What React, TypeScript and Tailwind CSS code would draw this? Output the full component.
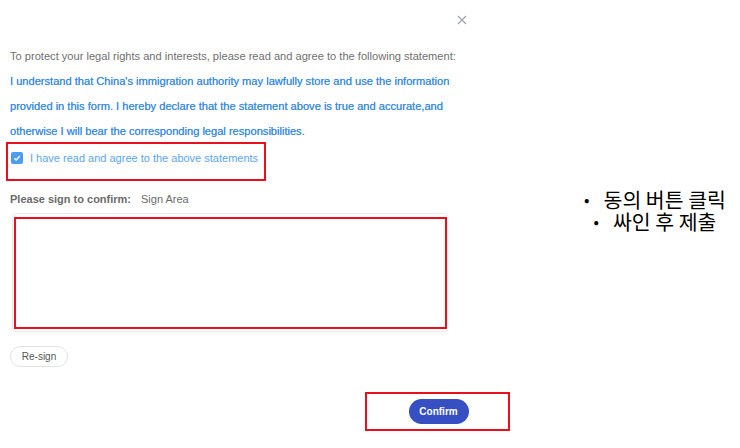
import React from 'react';

const App: React.FC = () => {
  return (
    <div className="w-[740px] h-[448px] bg-white flex overflow-hidden font-['Liberation_Sans',Arial,sans-serif]">
      <div className="w-[520px] shrink-0">
        <div className="h-[44px] flex justify-end pr-[53px] pt-[15px]">
          <svg width="10" height="10" viewBox="0 0 10 10" className="text-gray-400">
            <path d="M1 1L9 9M9 1L1 9" stroke="currentColor" strokeWidth="1.1" />
          </svg>
        </div>
        <div className="pl-[10px] text-[11.1px] leading-[25px] whitespace-nowrap">
          <p className="text-[#707070]">To protect your legal rights and interests, please read and agree to the following statement:</p>
          <p className="text-[#3f8fe3] [text-shadow:0_0_0.4px_#3f8fe3]">
            I understand that China's immigration authority may lawfully store and use the information
            <br />
            provided in this form. I hereby declare that the statement above is true and accurate,and
            <br />
            otherwise I will bear the corresponding legal responsibilities.
          </p>
        </div>
        <div className="ml-[6px] -mt-[2px] w-[260px] h-[39px] border-2 border-[#e8101a] flex items-center pb-[8px] pl-[3px] gap-[7px]">
          <span className="w-[12px] h-[12px] rounded-[2px] bg-[#4c9cf0] flex items-center justify-center">
            <svg width="8" height="8" viewBox="0 0 8 8">
              <path d="M1.2 4.2L3.2 6L6.8 2" stroke="white" strokeWidth="1.3" fill="none" />
            </svg>
          </span>
          <span className="text-[11px] text-[#5aa6f2] leading-[16px] whitespace-nowrap">I have read and agree to the above statements</span>
        </div>
        <div className="pl-[10px] mt-[10px] text-[11px] leading-[16px] flex gap-[10px]">
          <span className="font-bold text-[#6b6b6b]">Please sign to confirm:</span>
          <span className="text-[#6b6b6b]">Sign Area</span>
        </div>
        <div className="ml-[12px] mt-[6px] w-[436px] h-[119px] border border-[#ececec] rounded-[3px] pl-[1px] pt-[3px]">
          <div className="w-[433px] h-[112px] border-2 border-[#e8101a]" />
        </div>
        <div className="pl-[10px] mt-[11px]">
          <button className="h-[21px] w-[58px] rounded-full border border-[#e2e2e2] text-[10px] text-[#555] bg-white">Re-sign</button>
        </div>
        <div className="ml-[365px] mt-[25px] w-[145px] h-[39px] border-2 border-[#e8101a] flex justify-center items-start pt-[5px] pl-[2px]">
          <button className="w-[60px] h-[25px] rounded-full bg-[#3650c3] text-white text-[10px] font-bold">Confirm</button>
        </div>
      </div>
      <div className="flex-1 pt-[188px] pl-[50px] flex flex-col items-center text-[20.5px] leading-[22px] text-black font-['Noto_Sans_CJK_KR',sans-serif]">
        <p className="flex items-center gap-[14px] h-[22px]"><span className="text-[16px] leading-[22px]">•</span>동의 버튼 클릭</p>
        <p className="flex items-center gap-[14px] h-[22px]"><span className="text-[16px] leading-[22px]">•</span>싸인 후 제출</p>
      </div>
    </div>
  );
};

export default App;
